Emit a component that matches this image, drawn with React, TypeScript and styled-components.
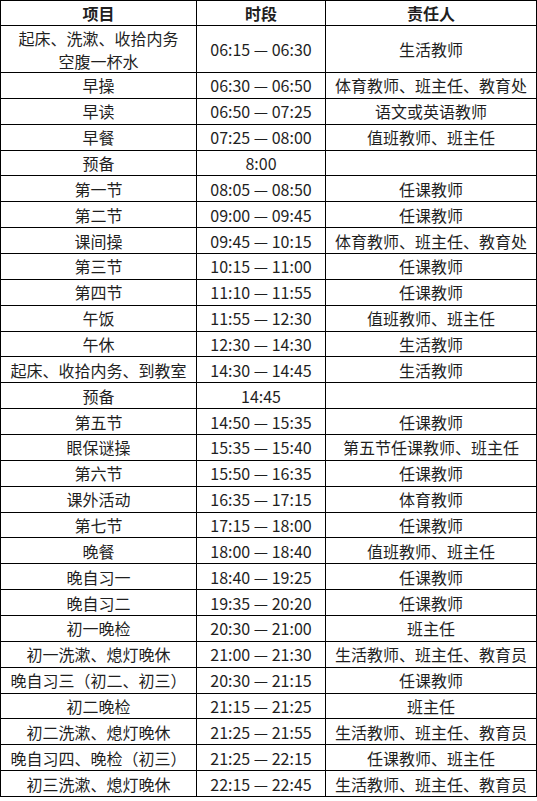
import styled, { createGlobalStyle } from "styled-components";

const GlobalStyle = createGlobalStyle`
  html, body {
    margin: 0;
    padding: 0;
    background: #fff;
  }
  body {
    font-family: "Noto Sans CJK SC", "Noto Sans", sans-serif;
    color: #1f1f1f;
  }
`;

type Row = {
  item: string;
  time: string;
  person: string;
};

const rows: Row[] = [
  { item: "早操", time: "06:30 — 06:50", person: "体育教师、班主任、教育处" },
  { item: "早读", time: "06:50 — 07:25", person: "语文或英语教师" },
  { item: "早餐", time: "07:25 — 08:00", person: "值班教师、班主任" },
  { item: "预备", time: "8:00", person: "" },
  { item: "第一节", time: "08:05 — 08:50", person: "任课教师" },
  { item: "第二节", time: "09:00 — 09:45", person: "任课教师" },
  { item: "课间操", time: "09:45 — 10:15", person: "体育教师、班主任、教育处" },
  { item: "第三节", time: "10:15 — 11:00", person: "任课教师" },
  { item: "第四节", time: "11:10 — 11:55", person: "任课教师" },
  { item: "午饭", time: "11:55 — 12:30", person: "值班教师、班主任" },
  { item: "午休", time: "12:30 — 14:30", person: "生活教师" },
  { item: "起床、收拾内务、到教室", time: "14:30 — 14:45", person: "生活教师" },
  { item: "预备", time: "14:45", person: "" },
  { item: "第五节", time: "14:50 — 15:35", person: "任课教师" },
  { item: "眼保谜操", time: "15:35 — 15:40", person: "第五节任课教师、班主任" },
  { item: "第六节", time: "15:50 — 16:35", person: "任课教师" },
  { item: "课外活动", time: "16:35 — 17:15", person: "体育教师" },
  { item: "第七节", time: "17:15 — 18:00", person: "任课教师" },
  { item: "晚餐", time: "18:00 — 18:40", person: "值班教师、班主任" },
  { item: "晚自习一", time: "18:40 — 19:25", person: "任课教师" },
  { item: "晚自习二", time: "19:35 — 20:20", person: "任课教师" },
  { item: "初一晚检", time: "20:30 — 21:00", person: "班主任" },
  { item: "初一洗漱、熄灯晚休", time: "21:00 — 21:30", person: "生活教师、班主任、教育员" },
  { item: "晚自习三（初二、初三）", time: "20:30 — 21:15", person: "任课教师" },
  { item: "初二晚检", time: "21:15 — 21:25", person: "班主任" },
  { item: "初二洗漱、熄灯晚休", time: "21:25 — 21:55", person: "生活教师、班主任、教育员" },
  { item: "晚自习四、晚检（初三）", time: "21:25 — 22:15", person: "任课教师、班主任" },
  { item: "初三洗漱、熄灯晚休", time: "22:15 — 22:45", person: "生活教师、班主任、教育员" },
];

export default function App() {
  return (
    <>
      <GlobalStyle />
      <Table>
        <Cell $head>项目</Cell>
        <Cell $head>时段</Cell>
        <Cell $head>责任人</Cell>

        <Cell>
          <Lines>
            <span>起床、洗漱、收拾内务</span>
            <span>空腹一杯水</span>
          </Lines>
        </Cell>
        <Cell>06:15 — 06:30</Cell>
        <Cell>生活教师</Cell>

        {rows.map((row, index) => (
          <Row key={index}>
            <Cell>{row.item}</Cell>
            <Cell>{row.time}</Cell>
            <Cell>{row.person}</Cell>
          </Row>
        ))}
      </Table>
    </>
  );
}

const Table = styled.div`
  display: grid;
  grid-template-columns: 195px 128px 210px;
  grid-template-rows: 24px 46px repeat(28, 24.86px);
  gap: 1px;
  width: 535px;
  border: 1px solid #000;
  background-color: #000;
`;

const Row = styled.div`
  display: contents;
`;

const Cell = styled.div<{ $head?: boolean }>`
  display: flex;
  align-items: center;
  justify-content: center;
  background-color: #fff;
  font-size: 16px;
  font-weight: ${(p) => (p.$head ? 700 : 400)};
  line-height: 1;
  white-space: nowrap;
  overflow: hidden;
`;

const Lines = styled.div`
  display: flex;
  flex-direction: column;
  align-items: center;
  line-height: 23px;
  padding-top: 2px;
`;
